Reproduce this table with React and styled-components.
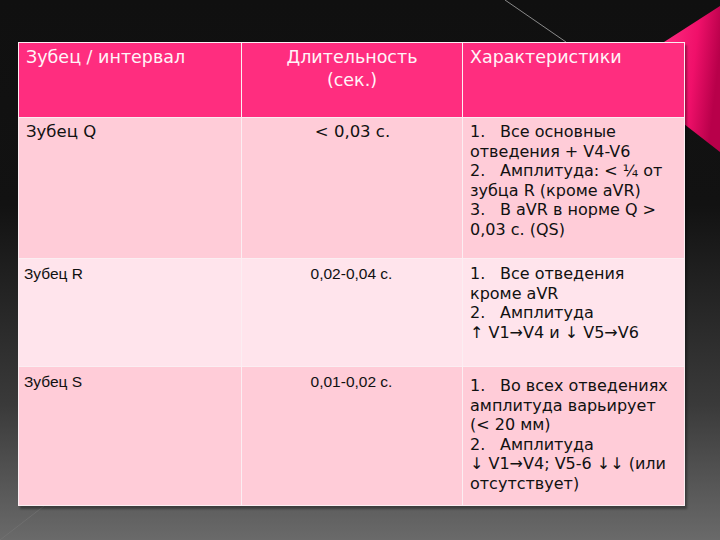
import styled, { createGlobalStyle } from 'styled-components';

const GlobalStyle = createGlobalStyle`
  html, body {
    margin: 0;
    padding: 0;
  }
  body {
    width: 720px;
    height: 540px;
    overflow: hidden;
    background: linear-gradient(180deg, #101010 0%, #121212 38%, #3a3a3a 75%, #6a6a6a 100%);
  }
`;

// each item: number + the lines as they wrap on the slide
const ROWS = [
  {
    name: 'Зубец Q',
    time: '< 0,03 с.',
    gothic: true,
    tone: 'dark',
    top: 4,
    items: [
      ['1.', ['Все основные', 'отведения + V4-V6']],
      ['2.', ['Амплитуда: < ¼ от', 'зубца R (кроме aVR)']],
      ['3.', ['В aVR в норме Q >', '0,03 с. (QS)']],
    ],
  },
  {
    name: 'Зубец R',
    time: '0,02-0,04 с.',
    gothic: false,
    tone: 'light',
    top: 5,
    items: [
      ['1.', ['Все отведения', 'кроме aVR']],
      ['2.', ['Амплитуда', '↑ V1→V4 и ↓ V5→V6']],
    ],
  },
  {
    name: 'Зубец S',
    time: '0,01-0,02 с.',
    gothic: false,
    tone: 'dark',
    top: 9,
    items: [
      ['1.', ['Во всех отведениях', 'амплитуда варьирует', '(< 20 мм)']],
      ['2.', ['Амплитуда', '↓ V1→V4; V5-6 ↓↓ (или', 'отсутствует)']],
    ],
  },
];

function App() {
  return (
    <>
      <GlobalStyle />
      <Slide>
        <Decor viewBox="0 0 720 540" width="720" height="540">
          <defs>
            <linearGradient id="pinkFold" x1="0" y1="0" x2="1" y2="0.3">
              <stop offset="0" stopColor="#ff2e82" />
              <stop offset="0.6" stopColor="#f0106a" />
              <stop offset="1" stopColor="#b8004a" />
            </linearGradient>
          </defs>
          <line x1="505" y1="0" x2="566" y2="42" stroke="#8a8a8a" strokeWidth="1" />
          <line x1="0" y1="540" x2="44" y2="506" stroke="#777" strokeWidth="1" opacity="0.6" />
          <polygon points="664,42 720,6 720,152 684,124" fill="url(#pinkFold)" />
        </Decor>
        <Table>
          <HeadCell $align="left">Зубец / интервал</HeadCell>
          <HeadCell $align="center">Длительность<br />(сек.)</HeadCell>
          <HeadCell $align="left">Характеристики</HeadCell>
          {ROWS.map((row) => (
            <Row key={row.name} row={row} />
          ))}
        </Table>
      </Slide>
    </>
  );
}

function Row({ row }) {
  return (
    <>
      <Cell $tone={row.tone} $align="left" $gothic={row.gothic}>{row.name}</Cell>
      <Cell $tone={row.tone} $align="center" $gothic={row.gothic}>{row.time}</Cell>
      <ListCell $tone={row.tone} $top={row.top}>
        {row.items.map(([num, lines]) => (
          <Item key={num}>
            <FirstLine>
              <Num>{num}</Num>
              <span>{lines[0]}</span>
            </FirstLine>
            {lines.slice(1).map((line) => (
              <Line key={line}>{line}</Line>
            ))}
          </Item>
        ))}
      </ListCell>
    </>
  );
}

export default App;

const Slide = styled.div`
  position: relative;
  width: 720px;
  height: 540px;
  padding: 42px 0 0 18px;
  box-sizing: border-box;
`;

const Decor = styled.svg`
  position: absolute;
  left: 0;
  top: 0;
  pointer-events: none;
`;

const Table = styled.div`
  position: relative;
  display: grid;
  grid-template-columns: 222px 220px 221px;
  grid-template-rows: 74px 140px 107px 138px;
  gap: 1px;
  width: 667px;
  padding: 1px;
  box-sizing: border-box;
  background: #fbeef2;
  box-shadow: 2px 3px 2px rgba(0, 0, 0, 0.35);
`;

const HeadCell = styled.div`
  background: #ff2d7f;
  color: #fff4f8;
  font-family: 'DejaVu Sans', sans-serif;
  font-size: 17.5px;
  line-height: 23px;
  padding: 3px 7px;
  text-align: ${({ $align }) => $align};
`;

const toneBg = ({ $tone }) => ($tone === 'light' ? '#ffe4ec' : '#ffccd8');

const Cell = styled.div`
  background: ${toneBg};
  color: #111;
  text-align: ${({ $align }) => $align};
  font-family: ${({ $gothic }) => ($gothic ? "'DejaVu Sans', sans-serif" : "'Liberation Sans', Arial, sans-serif")};
  font-size: ${({ $gothic }) => ($gothic ? '16.5px' : '15.5px')};
  line-height: 20px;
  padding: ${({ $gothic }) => ($gothic ? '4px 6px 0 7px' : '5px 6px 0 5px')};
`;

const ListCell = styled.div`
  background: ${toneBg};
  color: #111;
  font-family: 'DejaVu Sans', sans-serif;
  font-size: 16px;
  line-height: 19.5px;
  padding: ${({ $top }) => $top}px 0 0 7px;
  white-space: nowrap;
`;

const Item = styled.div`
  display: flex;
  flex-direction: column;
`;

const FirstLine = styled.div`
  display: flex;
`;

const Line = styled.div``;

const Num = styled.span`
  width: 30px;
  flex: none;
`;
